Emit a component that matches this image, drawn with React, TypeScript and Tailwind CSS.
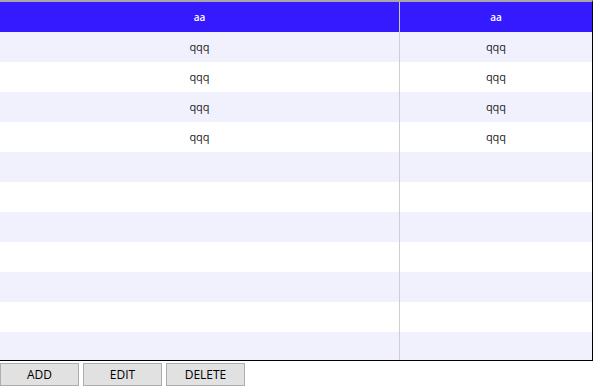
import React from "react";

const rows = Array.from({ length: 11 }, (_, i) => (i < 4 ? ["qqq", "qqq"] : ["", ""]));

export default function App() {
  return (
    <div className="w-[596px] h-[389px] bg-white" style={{ fontFamily: '"Open Sans", "Noto Sans", sans-serif' }}>
      <div className="w-[593px] h-[361px] border-t-2 border-t-[#a7a7a7] border-r border-r-black border-b border-b-black overflow-hidden flex flex-col">
        <div className="flex h-[30px] shrink-0 bg-[#3519ff] text-white text-[10px] font-semibold">
          <div className="w-[400px] border-r border-r-[#c8c8c8] flex items-center justify-center">aa</div>
          <div className="flex-1 flex items-center justify-center">aa</div>
        </div>
        {rows.map((r, i) => (
          <div key={i} className={`flex h-[30px] shrink-0 text-[11px] text-[#222] ${i % 2 === 0 ? "bg-[#f1f1fe]" : "bg-white"}`}>
            <div className="w-[400px] border-r border-r-[#cfcfcf] flex items-center justify-center">{r[0]}</div>
            <div className="flex-1 flex items-center justify-center">{r[1]}</div>
          </div>
        ))}
      </div>
      <div className="flex gap-[4px] mt-[2px]">
        {["ADD", "EDIT", "DELETE"].map((t) => (
          <button key={t} className="w-[79px] h-[23px] bg-[#e1e1e1] border border-[#adadad] text-[12px] text-black flex items-center justify-center">
            {t}
          </button>
        ))}
      </div>
    </div>
  );
}
